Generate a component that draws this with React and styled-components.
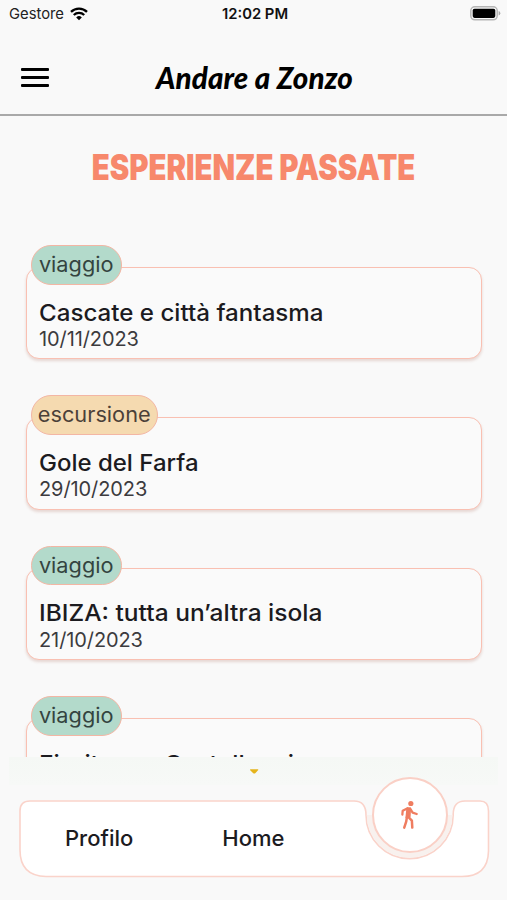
import React from 'react';
import styled, { createGlobalStyle } from 'styled-components';

const GlobalStyle = createGlobalStyle`
* { box-sizing: border-box; }
body {
  margin: 0;
  background: #f9f9f9;
  font-family: Inter, "Liberation Sans", sans-serif;
  color: #1c1b1f;
}
`
const Screen = styled.div`
display: flex;
flex-direction: column;
width: 507px;
height: 900px;
overflow: hidden;
`
const StatusBar = styled.div`
display: grid;
grid-template-columns: 1fr auto 1fr;
align-items: center;
height: 27px;
padding: 0 6px 0 9px;
font-size: 14.8px;
color: #222;
`
const Carrier = styled.div`
display: flex;
align-items: center;
gap: 6px;
`
const Clock = styled.div`
font-weight: 600;
letter-spacing: 0;
color: #111;
`
const BatteryIcon = styled.svg`
justify-self: end;
`
const Header = styled.header`
display: grid;
grid-template-columns: 50px 1fr 50px;
align-items: center;
height: 88.5px;
padding: 15px 20px 0;
border-bottom: 2px solid #a9a9a9;
`
const MenuButton = styled.button`
display: flex;
flex-direction: column;
gap: 5px;
width: 28px;
margin-left: 1px;
padding: 0;
border: 0;
background: none;
`
const MenuLine = styled.span`
height: 3px;
border-radius: 1px;
background: #000;
`
const Brand = styled.div`
justify-self: center;
padding-left: 2px;
font-family: Lato, sans-serif;
font-size: 29.5px;
font-style: italic;
font-weight: 900;
line-height: 36px;
letter-spacing: 0.1px;
white-space: nowrap;
color: #000;
`
const PageTitle = styled.h1`
display: flex;
justify-content: center;
margin: 29.5px 0 0;
font-size: 35px;
font-weight: 900;
line-height: 44px;
white-space: nowrap;
color: #f7886c;
transform: scaleX(0.838);
`
const List = styled.div`
display: flex;
flex-direction: column;
gap: 36px;
height: 511.5px;
margin-top: 56px;
padding: 0 25px 0 26px;
overflow: hidden;
`
const Item = styled.article`
display: flex;
flex-direction: column;
flex: none;
height: 114.4px;
`
const Chip = styled.span`
z-index: 1;
display: flex;
justify-content: center;
align-self: flex-start;
width: ${props => props.$wide ? '127px' : '91px'};
height: 39.5px;
margin: 0 0 -17.5px 5px;
border: 1px solid #f3b6a4;
border-radius: 20px;
background: ${props => props.$wide ? '#f5dab0' : '#b3dacb'};
color: ${props => props.$wide ? '#4b4038' : '#34443f'};
font-size: 20.5px;
line-height: 38.5px;
`
const ChipLabel = styled.span`
transform: scaleX(1.06);
`
const Card = styled.div`
flex: 1;
padding: 30.5px 12px 0;
border: 1.5px solid #f9c0b2;
border-radius: 13px;
background: #fafafa;
box-shadow: 0 2px 3px rgba(160, 80, 60, 0.2);
`
const ItemTitle = styled.div`
font-size: 22.8px;
font-weight: 500;
line-height: 28.5px;
white-space: nowrap;
transform: scaleX(${props => props.$stretch});
transform-origin: left;
`
const ItemDate = styled.div`
font-size: 20px;
line-height: 24px;
letter-spacing: -0.1px;
color: #3c3b3e;
`
const MoreStrip = styled.div`
display: flex;
justify-content: center;
height: 28px;
margin: 0 9px;
padding-top: 11px;
background: linear-gradient(#f5f8f5, #f7f9f7);
`
const Footer = styled.footer`
position: relative;
flex: 1;
`
const BarShape = styled.svg`
position: absolute;
left: 0;
top: -15px;
`
const Nav = styled.nav`
position: relative;
display: flex;
gap: 89px;
padding: 38px 0 0 65px;
font-size: 22px;
font-weight: 500;
line-height: 31px;
`
const WalkButton = styled.button`
position: absolute;
left: 371.5px;
top: -8px;
display: flex;
align-items: center;
justify-content: center;
width: 76px;
height: 76px;
padding: 1px 0 0;
border: 2px solid #fad0c6;
border-radius: 50%;
background: #fff;
`

const experiences = [
    { type: 'viaggio', title: 'Cascate e città fantasma', date: '10/11/2023', stretch: 1.058 },
    { type: 'escursione', title: 'Gole del Farfa', date: '29/10/2023', stretch: 1.052 },
    { type: 'viaggio', title: 'IBIZA: tutta un’altra isola', date: '21/10/2023', stretch: 1.075 },
    { type: 'viaggio', title: 'Fioritura a Castelluccio', date: '', stretch: 1.08 }
]

const WalkIcon = () => (
    <svg width="19" height="30" viewBox="0 0 18 29" fill="none" stroke="#ef7d60" strokeLinecap="round" strokeLinejoin="round">
        <circle cx="10.300" cy="3.400" r="2.500" fill="#ef7d60" stroke="none" />
        <path d="M6.800 8.200 9.600 8 9.200 16 6 17z" fill="#ef7d60" strokeWidth="1.800" />
        <path d="M7.200 8 2.400 10.400 2.100 14.200M9.800 8.600 12 12.200 16 13.500" strokeWidth="2.200" />
        <path d="M6.500 16.500 5.800 21 3.900 26.700M8 16.500 11.300 20 11.700 26.700" strokeWidth="2.400" />
    </svg>
)

const App = () => {
    return (
        <Screen>
            <GlobalStyle />
            <StatusBar>
                <Carrier>
                    Gestore
                    <svg width="18" height="14" viewBox="0 0 18 14" fill="none" stroke="#000" strokeWidth="2.3">
                        <path d="M1 4.900a11.400 11.400 0 0 1 16 0M3.800 8a7.400 7.400 0 0 1 10.400 0" />
                        <path d="M9 13.200 6.200 10.400a4 4 0 0 1 5.600 0z" fill="#000" stroke="none" />
                    </svg>
                </Carrier>
                <Clock>12:02 PM</Clock>
                <BatteryIcon width="31" height="15" viewBox="0 0 31 15">
                    <rect x="0.8" y="0.8" width="26.4" height="13" rx="4" fill="#f9f9f9" stroke="#b5b5b5" strokeWidth="1.5" />
                    <rect x="2.7" y="2.7" width="22.6" height="9.2" rx="1.8" fill="#000" />
                    <path d="M28.600 5v4.600q1.700-.6 1.700-2.300T28.600 5" fill="#aaa" />
                </BatteryIcon>
            </StatusBar>
            <Header>
                <MenuButton aria-label="menu">
                    <MenuLine />
                    <MenuLine />
                    <MenuLine />
                </MenuButton>
                <Brand>Andare a Zonzo</Brand>
            </Header>
            <PageTitle>ESPERIENZE PASSATE</PageTitle>
            <List>
                {experiences.map((item, i) => (
                    <Item key={i}>
                        <Chip $wide={item.type === 'escursione'}>
                            <ChipLabel>{item.type}</ChipLabel>
                        </Chip>
                        <Card>
                            <ItemTitle $stretch={item.stretch}>{item.title}</ItemTitle>
                            {item.date && <ItemDate>{item.date}</ItemDate>}
                        </Card>
                    </Item>
                ))}
            </List>
            <MoreStrip>
                <svg width="10" height="7" viewBox="0 0 10 7">
                    <path d="M1.500 1.200h7.500q.6.500 0 1L6.500 5q-1.200 1-2.500 0L1.200 2.200q-.5-.6.300-1" fill="#e5b41c" />
                </svg>
            </MoreStrip>
            <Footer>
                <BarShape width="507" height="130" viewBox="0 770 507 130">
                    <path
                        d="M30 801H354Q366 801 366 815A43.600 43.600 0 0 0 453.200 815Q453 801 465 801H480Q488.500 801 488.500 811V851Q488 876.500 462 876.500H46Q20 876 20 850V811Q20 801 30 801Z"
                        fill="#fff"
                        stroke="#fad3ca"
                        strokeWidth="1.6"
                    />
                    <path d="M366.800 815A42.800 42.800 0 0 0 452.400 815" fill="#f8f1ee" />
                </BarShape>
                <Nav>
                    <span>Profilo</span>
                    <span>Home</span>
                </Nav>
                <WalkButton aria-label="walk">
                    <WalkIcon />
                </WalkButton>
            </Footer>
        </Screen>
    );
}

export default App;
